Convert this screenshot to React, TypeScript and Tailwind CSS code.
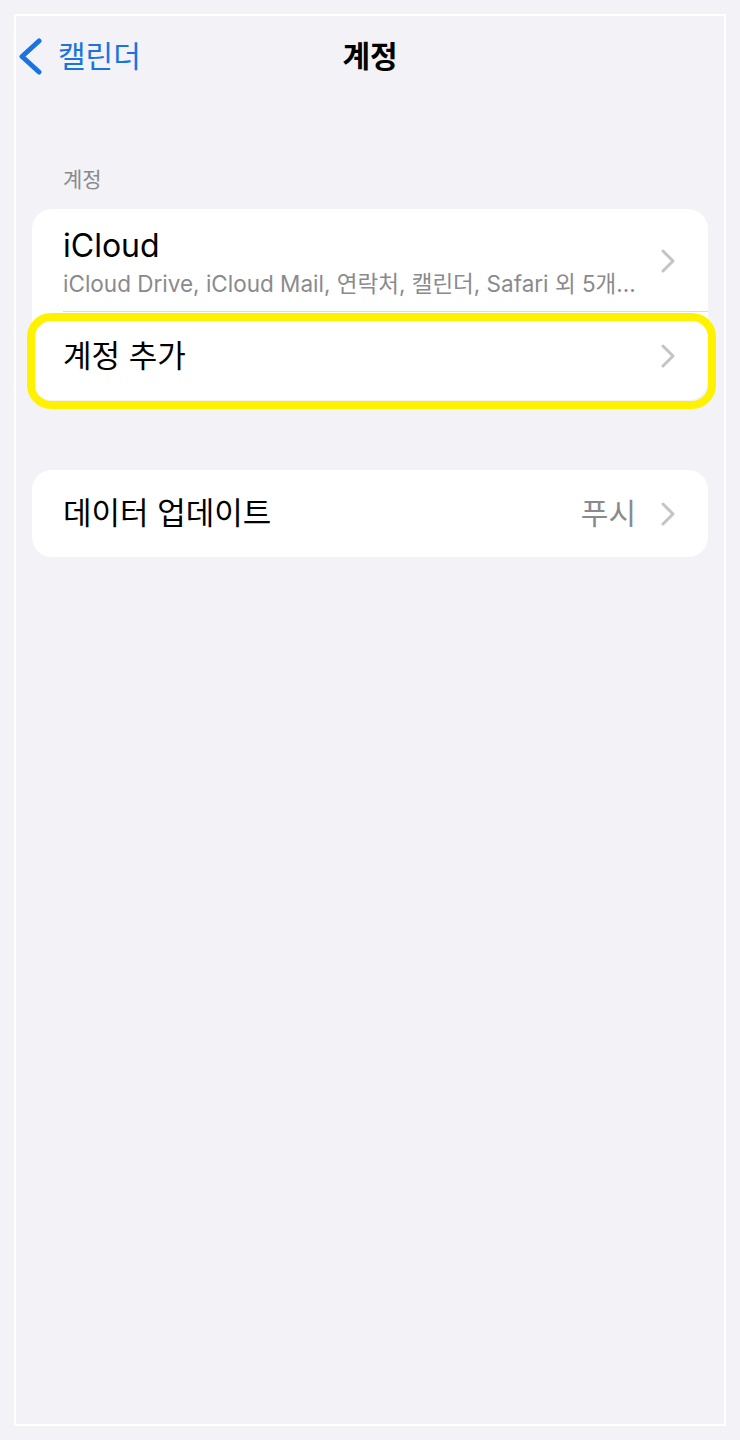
import React from "react";

const font = {fontFamily: 'Inter, "Noto Sans CJK KR", sans-serif'};

const Chevron: React.FC = () => (
    <svg width="14" height="24" viewBox="0 0 14 24" fill="none" className="shrink-0">
        <path d="M2 2 L12 12 L2 22" stroke="#c4c4c8" strokeWidth="3" strokeLinecap="round" strokeLinejoin="round"/>
    </svg>
);

const App: React.FC = () => {
    return (
        <div className="h-[1440px] w-[740px] bg-[#f2f2f7] p-[14px]" style={font}>
            <div className="h-full border-2 border-white flex flex-col">
                {/* nav bar */}
                <div className="h-[80px] grid grid-cols-[1fr_auto_1fr] items-center">
                    <div className="flex items-center">
                        <svg width="27" height="37" viewBox="0 0 27 37" fill="none" className="ml-px">
                            <path d="M22 3 L5 18.5 L22 34" stroke="#1a74e0" strokeWidth="5" strokeLinecap="round" strokeLinejoin="round"/>
                        </svg>
                        <span className="ml-[14px] text-[30px] leading-none text-[#1a74e0]">캘린더</span>
                    </div>
                    <div className="text-[30px] font-semibold text-black leading-none">계정</div>
                    <div/>
                </div>

                {/* section header */}
                <div className="mt-[70px] pl-[47px] text-[21px] leading-[28px] text-[#8a8a8e]">계정</div>

                <div className="mt-[15px] mx-4 bg-white rounded-[20px]">
                    <div className="flex items-center pl-[31px] pr-[33px] pt-[18px] pb-[13px]">
                        <div className="flex-1 min-w-0">
                            <div className="text-[32px] leading-[38px] text-black">iCloud</div>
                            <div className="mt-[5px] text-[22.5px] leading-[28px] text-[#8a8a8e] truncate pr-[4px]">
                                iCloud Drive, iCloud Mail, 연락처, 캘린더, Safari 외 5개...
                            </div>
                        </div>
                        <div className="-mt-[4px]"><Chevron/></div>
                    </div>
                    <div className="ml-[31px] h-px bg-[#dcdce0]"/>
                    <div className="relative h-[88px] flex items-center pl-[31px] pr-[33px]">
                        <span className="flex-1 text-[31px] text-black">계정 추가</span>
                        <Chevron/>
                        <div className="absolute -left-[5px] -right-[8px] top-px -bottom-[9px] border-[8px] border-[#fff200] rounded-[24px] pointer-events-none"/>
                    </div>
                </div>

                <div className="mt-[70px] mx-4 bg-white rounded-[20px] h-[87px] flex items-center pl-[31px] pr-[33px]">
                    <span className="flex-1 text-[31px] text-black">데이터 업데이트</span>
                    <span className="text-[30px] text-[#8a8a8e] mr-[25px]">푸시</span>
                    <Chevron/>
                </div>
            </div>
        </div>
    );
};

export default App;
